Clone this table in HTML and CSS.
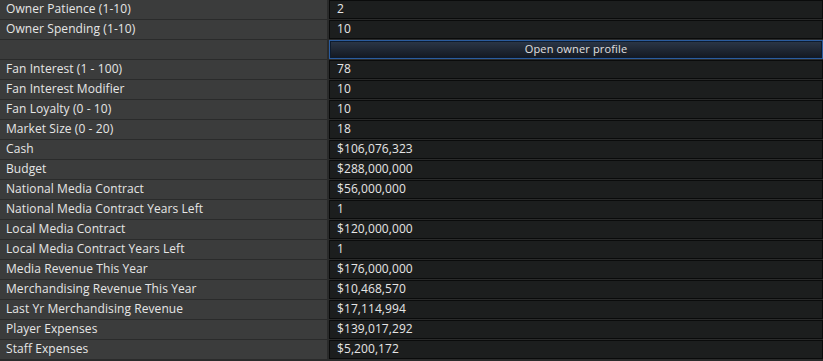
FILE: index.html
```html
<!DOCTYPE html>
<html>
<head>
<meta charset="utf-8">
<link rel="stylesheet" href="styles.css">
</head>
<body>
<div class="grid">
  <div class="row"><div class="label">Owner Patience (1-10)</div><div class="value">2</div></div>
  <div class="row"><div class="label">Owner Spending (1-10)</div><div class="value">10</div></div>
  <div class="row"><div class="label"></div><div class="btn-cell"><button class="btn">Open owner profile</button></div></div>
  <div class="row"><div class="label">Fan Interest (1 - 100)</div><div class="value">78</div></div>
  <div class="row"><div class="label">Fan Interest Modifier</div><div class="value">10</div></div>
  <div class="row"><div class="label">Fan Loyalty (0 - 10)</div><div class="value">10</div></div>
  <div class="row"><div class="label">Market Size (0 - 20)</div><div class="value">18</div></div>
  <div class="row"><div class="label">Cash</div><div class="value">$106,076,323</div></div>
  <div class="row"><div class="label">Budget</div><div class="value">$288,000,000</div></div>
  <div class="row"><div class="label">National Media Contract</div><div class="value">$56,000,000</div></div>
  <div class="row"><div class="label">National Media Contract Years Left</div><div class="value">1</div></div>
  <div class="row"><div class="label">Local Media Contract</div><div class="value">$120,000,000</div></div>
  <div class="row"><div class="label">Local Media Contract Years Left</div><div class="value">1</div></div>
  <div class="row"><div class="label">Media Revenue This Year</div><div class="value">$176,000,000</div></div>
  <div class="row"><div class="label">Merchandising Revenue This Year</div><div class="value">$10,468,570</div></div>
  <div class="row"><div class="label">Last Yr Merchandising Revenue</div><div class="value">$17,114,994</div></div>
  <div class="row"><div class="label">Player Expenses</div><div class="value">$139,017,292</div></div>
  <div class="row"><div class="label">Staff Expenses</div><div class="value">$5,200,172</div></div>
</div>
</body>
</html>
```
FILE: styles.css
```css
html, body {
  margin: 0;
  padding: 0;
  background: #2a2b2b;
  font-family: "Open Sans", "Noto Sans", sans-serif;
  font-size: 12px;
  letter-spacing: 0.08px;
  color: #e6e6e6;
}
.grid {
  display: flex;
  flex-direction: column;
  width: 823px;
}
.row {
  display: grid;
  grid-template-columns: 327px 494px;
  column-gap: 2px;
  height: 20px;
  background: #2a2b2b;
}
.label {
  background: #3b3c3c;
  height: 19px;
  line-height: 17px;
  padding-left: 6px;
  white-space: nowrap;
}
.value {
  background: #1c1e1e;
  border: 1px solid #0a0b0b;
  height: 17px;
  line-height: 16px;
  padding-left: 7px;
  box-sizing: content-box;
}
.btn-cell {
  height: 19px;
  display: flex;
}
.btn {
  flex: 1;
  margin: 0;
  padding: 0 0 2px 0;
  height: 19px;
  border: 1px solid #2b5c9e;
  background: linear-gradient(#2c3748, #131820);
  color: #e0e0e0;
  font-family: "Open Sans", "Noto Sans", sans-serif;
  font-size: 11px;
  letter-spacing: 0.15px;
  line-height: 15px;
  box-shadow: inset 0 0 0 1px #0d1b2e;
}
```
